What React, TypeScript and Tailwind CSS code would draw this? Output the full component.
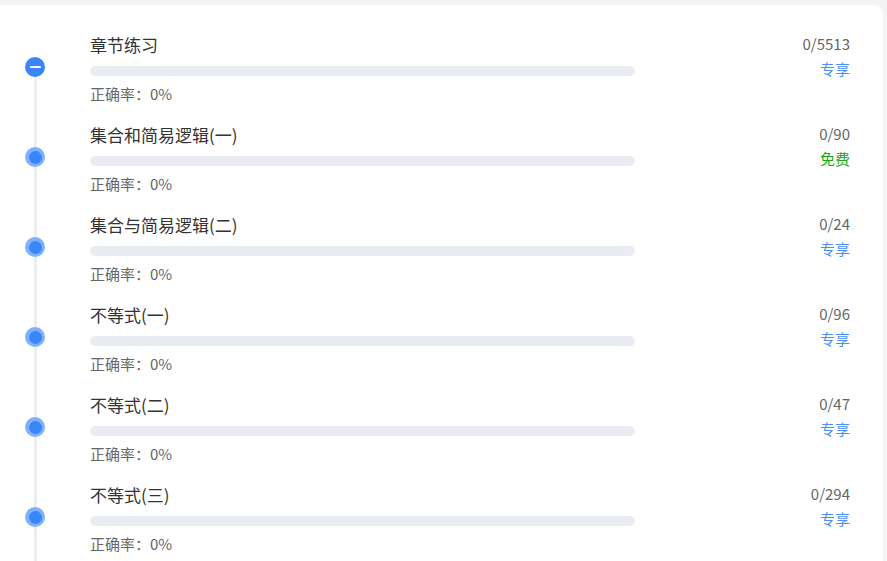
const chapters = [
  { title: "章节练习", count: "0/5513", tag: "专享", top: true },
  { title: "集合和简易逻辑(一)", count: "0/90", tag: "免费" },
  { title: "集合与简易逻辑(二)", count: "0/24", tag: "专享" },
  { title: "不等式(一)", count: "0/96", tag: "专享" },
  { title: "不等式(二)", count: "0/47", tag: "专享" },
  { title: "不等式(三)", count: "0/294", tag: "专享" },
];

export default function App() {
  return (
    <div
      className="min-h-screen bg-[#f4f4f4] pt-[5px] pr-[4px] overflow-hidden"
      style={{ fontFamily: '"Noto Sans CJK SC", "Noto Sans", sans-serif' }}
    >
      <div className="bg-white rounded-tr-[10px] pt-[28px] pr-[33px]">
        {chapters.map((item) => (
          <div key={item.title} className="flex h-[90px]">
            {/* Timeline */}
            <div className="relative w-[90px] shrink-0">
              <div
                className={
                  item.top
                    ? "absolute left-[34px] top-[34px] bottom-0 w-[3px] bg-[#eeeeee]"
                    : "absolute left-[34px] top-0 bottom-0 w-[3px] bg-[#eeeeee]"
                }
              />
              {item.top ? (
                <div className="absolute left-[25px] top-[24px] w-[20px] h-[20px] rounded-full bg-[#3a86f8] flex items-center justify-center">
                  <div className="w-[11px] h-[2.5px] bg-white rounded-sm" />
                </div>
              ) : (
                <div className="absolute left-[25px] top-[24px] w-[20px] h-[20px] rounded-full bg-[#7fb1fa] flex items-center justify-center">
                  <div className="w-[13px] h-[13px] rounded-full bg-[#3a86f8]" />
                </div>
              )}
            </div>

            {/* Content */}
            <div className="w-[545px] shrink-0">
              <div className="text-[17px] leading-[24px] text-[#333333]">{item.title}</div>
              <div className="mt-[9px] h-[10px] rounded-full bg-[#e9ecf3]" />
              <div className="mt-[8px] text-[15px] leading-[20px] text-[#666666]">正确率：0%</div>
            </div>

            {/* Right */}
            <div className="flex-1 flex flex-col items-end pt-[1px]">
              <div className="text-[15px] leading-[20px] text-[#666666]">{item.count}</div>
              <div
                className={
                  item.tag === "免费"
                    ? "mt-[5px] text-[15px] leading-[20px] text-[#18a718]"
                    : "mt-[5px] text-[15px] leading-[20px] text-[#4a90f7]"
                }
              >
                {item.tag}
              </div>
            </div>
          </div>
        ))}
      </div>
    </div>
  );
}
